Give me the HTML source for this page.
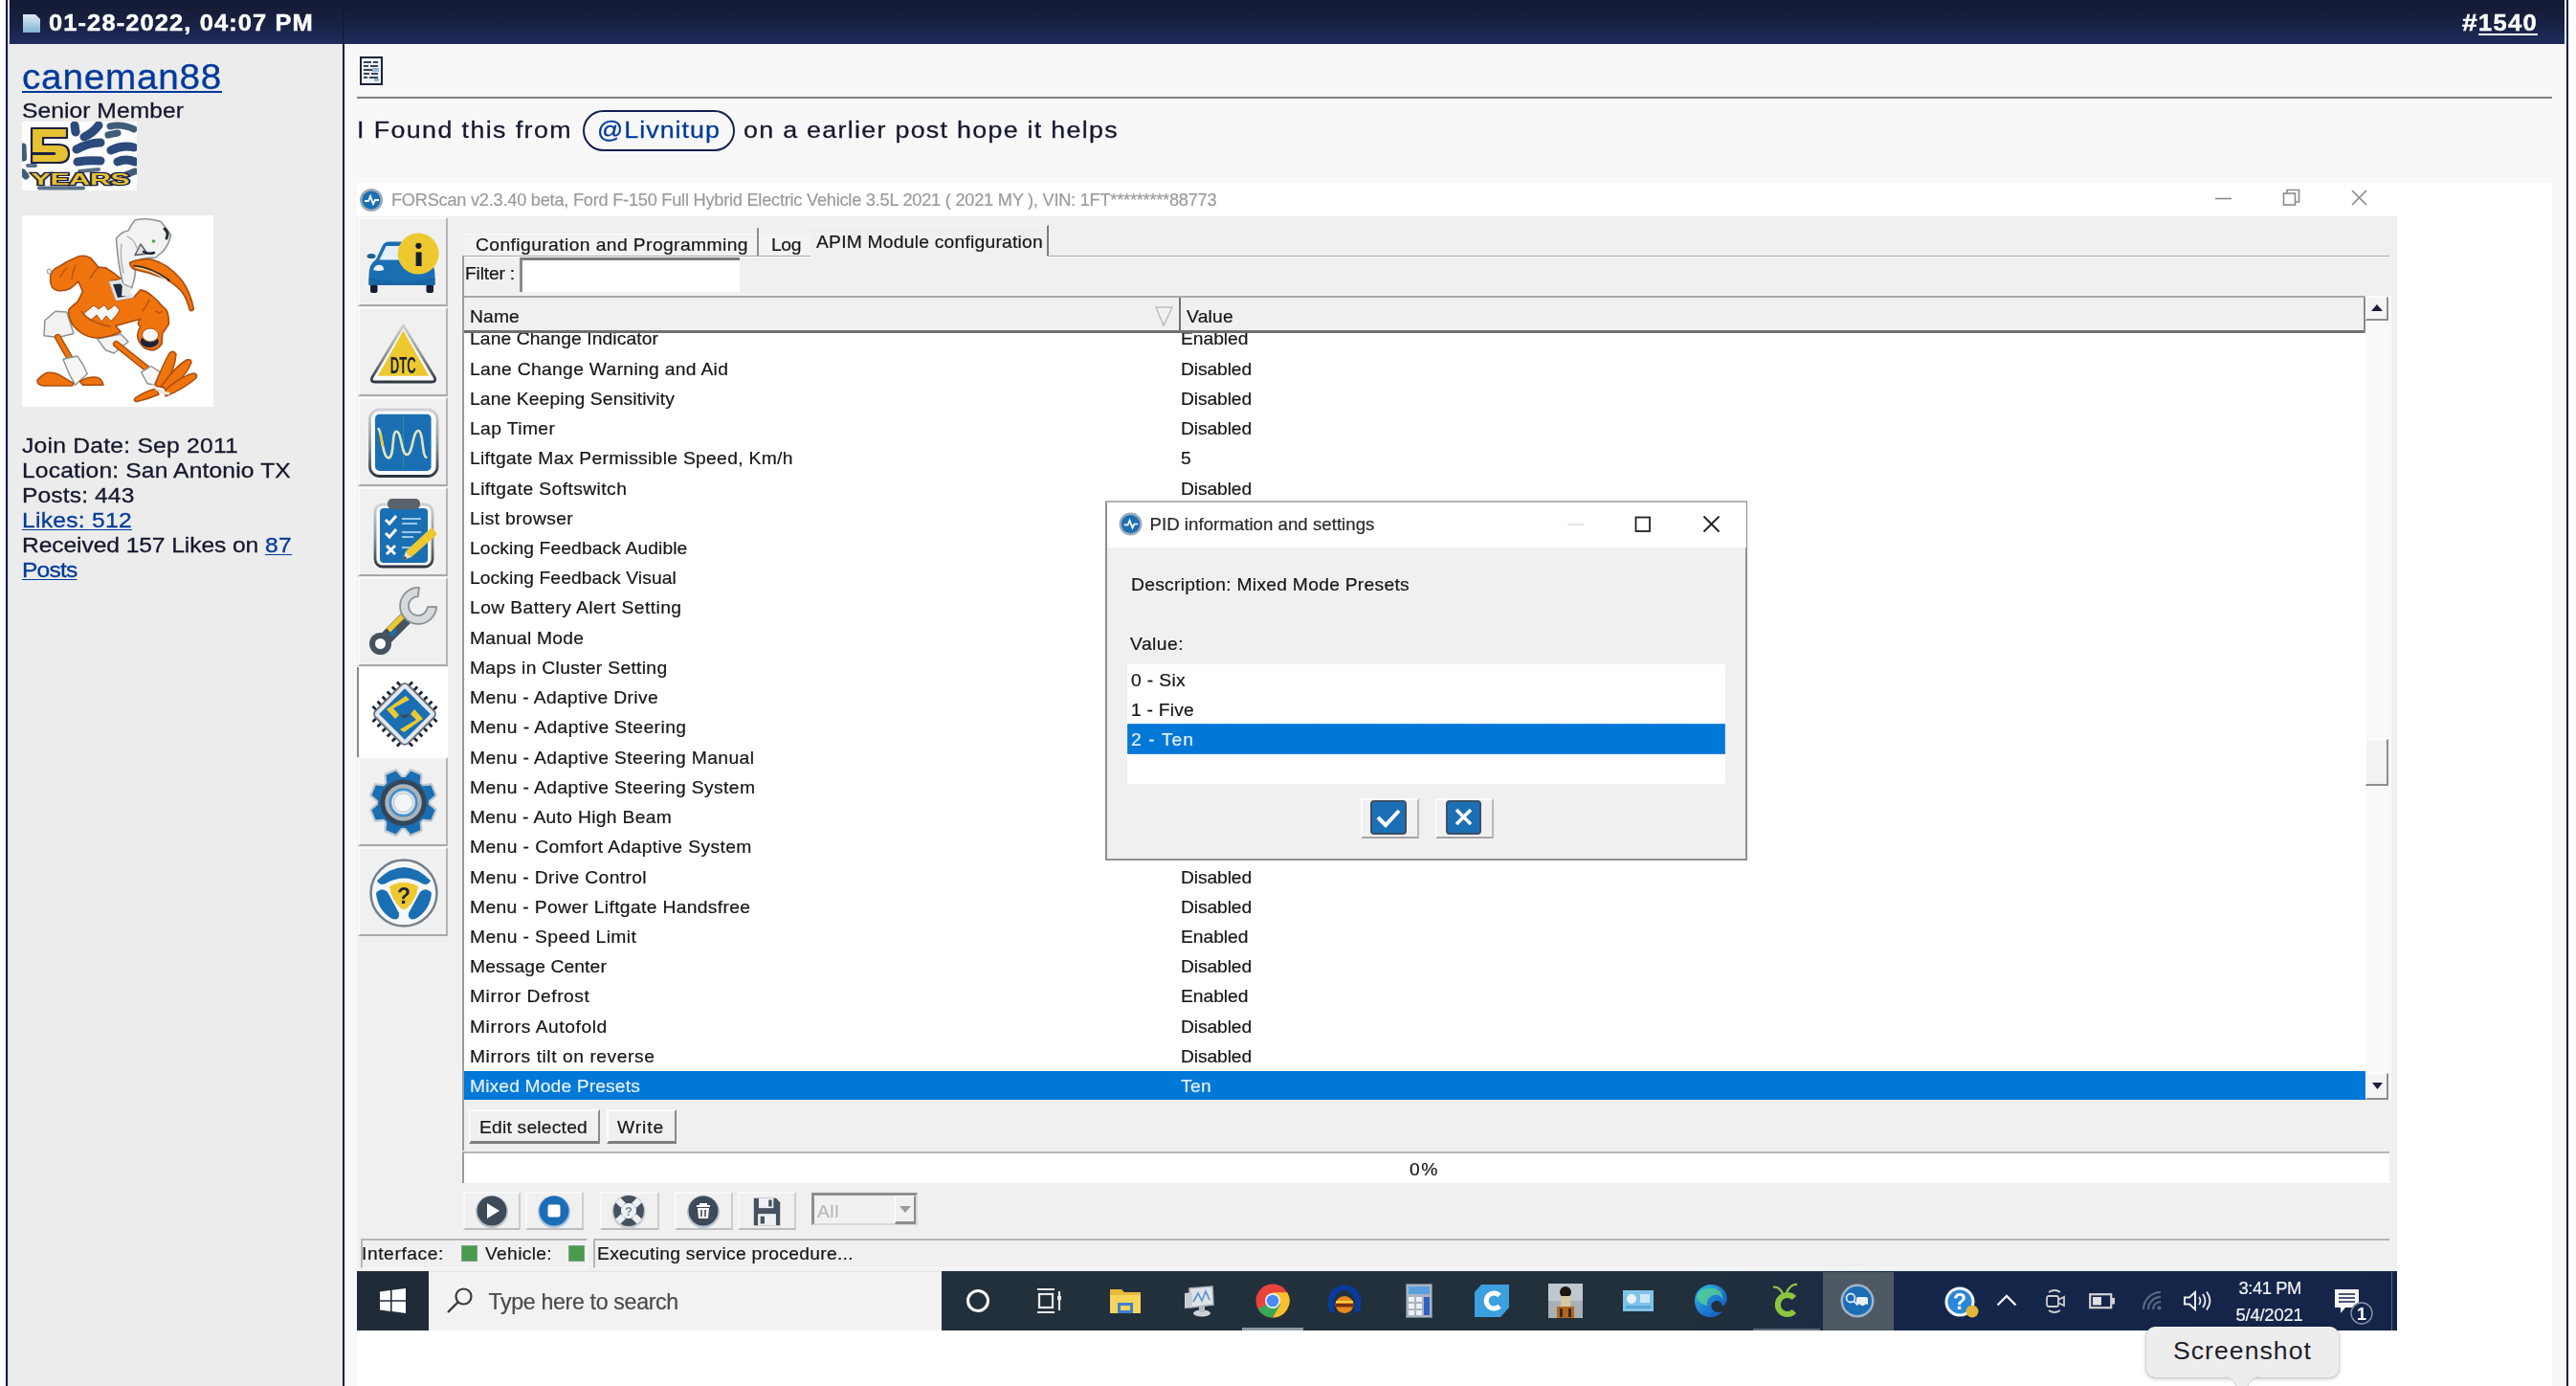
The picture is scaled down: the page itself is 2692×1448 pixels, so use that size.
<!DOCTYPE html>
<html><head><meta charset="utf-8"><title>Post</title>
<style>
html,body{margin:0;padding:0;background:#fff;}
body{width:2692px;height:1448px;overflow:hidden;position:relative;font-family:"Liberation Sans",sans-serif;}
.t{position:absolute;white-space:nowrap;font-family:"Liberation Sans",sans-serif;}
.b{position:absolute;box-sizing:border-box;}
svg{position:absolute;overflow:visible;}

.hdr{background:linear-gradient(#141a34 0%,#17203f 45%,#1f2c5d 100%);}
a{color:#003a9b}
.ui{filter:blur(0.35px);-webkit-text-stroke:0.2px currentColor;}
.v{-webkit-text-stroke:0.3px currentColor;}
.vb{-webkit-text-stroke:0.45px currentColor;}

</style></head><body>
<div class="b " style="left:6.0px;top:0.0px;width:2.0px;height:1448.0px;background:#0c1450;"></div>
<div class="b " style="left:8.0px;top:0.0px;width:2.0px;height:1448.0px;background:#dfe1ea;"></div>
<div class="b " style="left:10.0px;top:46.0px;width:348.0px;height:1402.0px;background:#ececec;"></div>
<div class="b " style="left:358.0px;top:0.0px;width:2.0px;height:1448.0px;background:#0c1450;"></div>
<div class="b " style="left:360.0px;top:46.0px;width:2322.0px;height:1402.0px;background:#f8f8f8;"></div>
<div class="b hdr" style="left:10.0px;top:0.0px;width:2670.0px;height:46.0px;"></div>
<div class="b " style="left:358.0px;top:0.0px;width:1.0px;height:46.0px;background:#10183a;"></div>
<div class="b " style="left:2682.0px;top:0.0px;width:2.0px;height:1448.0px;background:#0c1450;"></div>
<svg style="left:23px;top:14px" width="20" height="21" viewBox="0 0 20 21"><defs><linearGradient id="dg" x1="0" y1="0" x2="0" y2="1"><stop offset="0" stop-color="#dfeaf3"/><stop offset="1" stop-color="#7fb4d6"/></linearGradient></defs><path d="M1 1 H14 L19 6 V20 H1 Z" fill="url(#dg)"/></svg>
<div class="t vb" style="left:51.0px;top:13.3px;font-size:23.6px;line-height:23.6px;letter-spacing:1.016px;color:#fff;font-weight:bold;transform:scaleX(1.080);transform-origin:0 0;">01-28-2022, 04:07 PM</div>
<div class="t vb" style="left:2573.0px;top:13.3px;font-size:23.6px;line-height:23.6px;letter-spacing:0.000px;color:#fff;font-weight:bold;transform:scaleX(1.200);transform-origin:0 0;">#</div>
<div class="t vb" style="left:2589.5px;top:13.3px;font-size:23.6px;line-height:23.6px;letter-spacing:1.227px;color:#fff;font-weight:bold;transform:scaleX(1.080);transform-origin:0 0;text-decoration:underline;text-decoration-thickness:1.6px;text-underline-offset:3px;">1540</div>
<div class="t v" style="left:23.0px;top:61.7px;font-size:37px;line-height:37px;letter-spacing:0.737px;color:#003a9b;transform:scaleX(1.045);transform-origin:0 0;text-decoration:underline;text-decoration-thickness:2px;text-underline-offset:2px;">caneman88</div>
<div class="t v" style="left:23.0px;top:105.1px;font-size:22.6px;line-height:22.6px;letter-spacing:0.042px;color:#15182c;transform:scaleX(1.090);transform-origin:0 0;">Senior Member</div>
<svg style="left:23px;top:127px;overflow:hidden" width="120" height="72" viewBox="0 0 120 72">
<rect width="120" height="72" fill="#fdfdfd"/>
<g fill="none" stroke-linecap="round">
<g stroke="#2c4a7c" stroke-width="9">
<path d="M55 4 L56 11"/><path d="M80 4 Q74 12 65 16"/><path d="M57 29 Q70 22 82 22"/><path d="M58 42 Q70 40 82 41"/><path d="M93 30 Q105 24 117 27"/><path d="M100 42 Q108 38 118 42"/>
</g>
<g stroke="#3f5d78" stroke-width="7">
<path d="M92 5 Q104 2 117 8"/><path d="M90 14 L100 12"/><path d="M1 26 L1.500 38"/><path d="M1 53 L4 57"/><path d="M108 56 L118 52"/>
</g>
<g stroke="#5a7288" stroke-width="4"><path d="M6 46 L14 46"/><path d="M18 69.500 H64"/><path d="M60 52 L80 50"/></g>
</g>
<path d="M10 7 H47 V17 H22 V24 H38 Q49 24 49 33 V34 Q49 43 38 43 H10 V34 H33 Q36 33.500 33 33 H10 Z" fill="#e6c232" stroke="#1b2144" stroke-width="2.200" stroke-linejoin="round"/>
<text x="9.500" y="66" font-family="Liberation Sans" font-weight="bold" font-size="21" fill="#e6c232" stroke="#1b2144" stroke-width="3" paint-order="stroke" textLength="103" lengthAdjust="spacingAndGlyphs" transform="translate(0,66) scale(1,0.800) translate(0,-66)">YEARS</text>
</svg>
<svg style="left:23px;top:225px;filter:blur(0.4px)" width="200" height="200" viewBox="0 0 200 200"><rect width="200" height="200" fill="#fff"/>
<g stroke-linejoin="round" stroke-linecap="round">
<!-- neck + head -->
<path d="M118 5 Q132 2 145 6.500 Q150 12 155.500 20.500 Q154 30 147 38 L139 44.500 Q130 44 124 46 L118 50 Q120 62 114.500 76 L105.500 71.500 Q100 50 98.500 24 Q104 17 111 16 Q114 10 118 5Z" fill="#f1f2f1" stroke="#8c9491" stroke-width="1.600"/>
<path d="M124 30 L131 40 L118 41.500 Z" fill="#dfe2e0" stroke="#525a63" stroke-width="1.400"/>
<path d="M127 38 q6 3 11 1" stroke="#1d2435" stroke-width="2.500" fill="none"/>
<path d="M149 14 q5 4 2 10" stroke="#2a2f38" stroke-width="3" fill="none"/>
<circle cx="137.500" cy="27" r="1.800" fill="#45b045"/>
<path d="M104 30 q-2 14 2 30 M110 22 q8 4 10 12" stroke="#a9b0ad" stroke-width="1.300" fill="none"/>
<!-- beak -->
<path d="M112.700 49.500 Q122 45 135 46 Q152 50 166.700 67.500 Q176 80 179.400 98 Q177.500 100.500 175.400 99 Q172 86 166.700 79.400 Q158 70 148 65.500 Q134 60 117.500 56.500 Q113 54 112.700 49.500Z" fill="#f0740e" stroke="#a84d0d" stroke-width="1.600"/>
<path d="M117 52.500 Q136 54 154 68" stroke="#2a2520" stroke-width="1.600" fill="none"/>
<path d="M119 54.500 Q136 57 151 67.500" stroke="#e9e3d6" stroke-width="1.200" fill="none"/>
<!-- puffs -->
<path d="M34.900 100.300 L46.800 101 L54 123.500 L38 127.500 L23 125.700 L23.800 109.800 Z" fill="#f1f2f1" stroke="#8c9491" stroke-width="1.500"/>
<path d="M78.600 128.900 L103.200 124 L111.100 132 L96 144 L87.300 140.800 Z" fill="#f1f2f1" stroke="#8c9491" stroke-width="1.500"/>
<!-- left arm -->
<path d="M30 62 Q33 55 38 54 Q46 48 55.600 44.400 Q63.500 40 71.400 44.400 Q76 49 79.400 54 L87.300 54.800 Q96 60 103.200 66 L91.300 69 L98.400 88.900 L116.700 85.700 L123.800 77.800 Q130 79 135 83.300 Q142 89 146.800 95.200 Q152 99 152.400 103.200 Q154 110 153.200 113.800 Q150 119 146.800 123.300 L146 134.400 Q143 139 138 140.800 Q131 141 127 137.600 Q121 132 120.600 125.700 Q121 120 123.800 116.200 Q119 113 123.800 108.300 L97.600 115.400 L103.200 121.700 Q92 127 79.400 128 Q70 128.500 60.300 121.700 Q52 115 50.800 109.800 Q48 104 49.200 98 Q53 94 58 90.500 Q61 85 63.500 79.400 L58.700 69 Q55 73 50.800 76.200 Q44 79.500 38 78.600 Q33 77.500 31.700 75.400 Q28.500 69 30 62Z" fill="#f0740e" stroke="#a84d0d" stroke-width="1.600"/>
<circle cx="28.500" cy="58.500" r="2.500" fill="#e6e8e6" stroke="#8c9491" stroke-width="1"/>
<!-- collar -->
<path d="M91.300 69 L103 68.300 L116.700 85.700 L98.400 88.900 Z" fill="#e4e7e9" stroke="#cfd4d8" stroke-width="0.800"/>
<path d="M95 72 L103 71.500 L112.500 84 L100 86 Z" fill="#1e2a40"/>
<path d="M105 72 L114.500 76 L112 85 L104 84 Z" fill="#e6e8e6"/>
<!-- M -->
<path d="M64 103 L75 94 L80 98 L86 93.500 L90 99 L97 93.500 L102 99 L99 104 L93 110.500 L88 105 L83 111 L78 104 L72 109.500 Z" fill="#f6f6f4" stroke="#a84d0d" stroke-width="1"/>
<!-- muscle lines -->
<path d="M40 64 Q43 58 47 55 M52 66 Q53 58 56 52 M71 66 Q76 58 80 54 M62 100 Q70 112 92 116 M126 100 Q131 94 133 88 M140 100 Q144 104 146 100" stroke="#b3540f" stroke-width="1.500" fill="none"/>
<!-- fist -->
<ellipse cx="133.300" cy="131.500" rx="9.500" ry="6.500" fill="#1b2340"/>
<ellipse cx="134.100" cy="125" rx="8.500" ry="7" fill="#f6f6f4" stroke="#a84d0d" stroke-width="1"/>
<!-- legs -->
<path d="M37.300 127.300 L52.400 153.500" stroke="#a84d0d" stroke-width="7"/><path d="M37.300 127.300 L52.400 153.500" stroke="#f0740e" stroke-width="4.200"/>
<path d="M98.400 134.400 L130.200 159.800" stroke="#a84d0d" stroke-width="7"/><path d="M98.400 134.400 L130.200 159.800" stroke="#f0740e" stroke-width="4.200"/>
<!-- ankle puffs -->
<path d="M42.900 150.300 L57.900 147 Q64 155 68.300 165.400 L55.600 177.300 L49.200 165.400 Z" fill="#f6f6f5" stroke="#8c9491" stroke-width="1.400"/>
<path d="M124.600 163.800 L134.900 157.500 L144.400 163.800 L138.100 177.300 L131 175.700 Z" fill="#f6f6f5" stroke="#8c9491" stroke-width="1.400"/>
<!-- left foot -->
<path d="M15.900 172.500 Q20 167 25.400 164.600 Q32 163.500 38.100 166.200 L54 175.700 L52.400 178.100 L22.200 178.100 Q16 177 15.900 172.500Z" fill="#f0740e" stroke="#a84d0d" stroke-width="1.500"/>
<path d="M60.300 173.300 Q70 168 79.400 169.400 Q84 172 84.900 177.300 L63.500 177.300 Z" fill="#f0740e" stroke="#a84d0d" stroke-width="1.500"/>
<!-- right foot toes -->
<g fill="#f0740e" stroke="#a84d0d" stroke-width="1.500">
<path d="M139 178 Q146 158 154 144 Q158 140 161 145 Q160 160 149 180 Z"/>
<path d="M146 178 Q160 158 172 151 Q177 149.500 177 154 Q170 170 152 184 Z"/>
<path d="M150 182 Q166 168 179 165 Q184 165.500 182 170 Q168 182 150 189 Z"/>
<path d="M140 181 Q128 184 118 191 Q116 194 120 194.500 Q132 192 143 187 Z"/>
</g>
<path d="M137 178 Q145 186 153 186" stroke="#e9e6da" stroke-width="3" fill="none"/>
</g>
</svg>
<div class="t v" style="left:23.0px;top:454.8px;font-size:22.6px;line-height:22.6px;letter-spacing:0.222px;color:#15182c;transform:scaleX(1.090);transform-origin:0 0;">Join Date: Sep 2011</div>
<div class="t v" style="left:23.0px;top:480.9px;font-size:22.6px;line-height:22.6px;letter-spacing:0.131px;color:#15182c;transform:scaleX(1.090);transform-origin:0 0;">Location: San Antonio TX</div>
<div class="t v" style="left:23.0px;top:506.9px;font-size:22.6px;line-height:22.6px;letter-spacing:0.101px;color:#15182c;transform:scaleX(1.090);transform-origin:0 0;">Posts: 443</div>
<div class="t v" style="left:23.0px;top:533.0px;font-size:22.6px;line-height:22.6px;letter-spacing:0.248px;color:#003a9b;transform:scaleX(1.090);transform-origin:0 0;text-decoration:underline;text-decoration-thickness:1.4px;text-underline-offset:2px;">Likes: 512</div>
<div class="t v" style="left:23.0px;top:559.1px;font-size:22.6px;line-height:22.6px;letter-spacing:-0.087px;color:#15182c;transform:scaleX(1.090);transform-origin:0 0;">Received 157 Likes on </div>
<div class="t v" style="left:277.0px;top:559.1px;font-size:22.6px;line-height:22.6px;letter-spacing:0.275px;color:#003a9b;transform:scaleX(1.090);transform-origin:0 0;text-decoration:underline;text-decoration-thickness:1.4px;text-underline-offset:2px;">87</div>
<div class="t v" style="left:23.0px;top:585.2px;font-size:22.6px;line-height:22.6px;letter-spacing:-0.754px;color:#003a9b;transform:scaleX(1.090);transform-origin:0 0;text-decoration:underline;text-decoration-thickness:1.4px;text-underline-offset:2px;">Posts</div>
<svg style="left:376px;top:59px" width="24" height="30" viewBox="0 0 24 30"><rect x="1" y="1" width="22" height="28" fill="#eef3f8" stroke="#1b2238" stroke-width="2"/><g stroke="#39455e" stroke-width="2"><path d="M4 6h8M14 6h5M4 10h5M11 10h8M4 14h9M4 18h6M12 18h7M4 22h4M10 22h9"/></g><rect x="13" y="12" width="7" height="4" fill="#8fb6d8"/><rect x="15" y="23" width="5" height="3" fill="#8fb6d8"/></svg>
<div class="b " style="left:373.0px;top:101.0px;width:2294.0px;height:2.0px;background:#808080;"></div>
<div class="t v" style="left:373.0px;top:123.6px;font-size:24.6px;line-height:24.6px;letter-spacing:1.285px;color:#15182c;transform:scaleX(1.090);transform-origin:0 0;">I Found this from</div>
<div class="b " style="left:609.0px;top:115.0px;width:159.0px;height:43.0px;border:2px solid #14204f;border-radius:22px;"></div>
<div class="t v" style="left:624.0px;top:123.6px;font-size:24.6px;line-height:24.6px;letter-spacing:0.954px;color:#003a9b;transform:scaleX(1.090);transform-origin:0 0;">@Livnitup</div>
<div class="t v" style="left:777.0px;top:123.6px;font-size:24.6px;line-height:24.6px;letter-spacing:1.190px;color:#15182c;transform:scaleX(1.090);transform-origin:0 0;">on a earlier post hope it helps</div>
<div class="b " style="left:373.0px;top:191.0px;width:2294.0px;height:1257.0px;background:#fff;"></div>
<div class="b " style="left:373.0px;top:226.0px;width:2132.0px;height:1103.0px;background:#f0f0f0;"></div>
<svg style="left:375px;top:196px" width="26" height="26" viewBox="0 0 26 26"><circle cx="13" cy="13" r="12" fill="#9aa9b8"/><circle cx="13" cy="13" r="9.6" fill="#1c6fb3"/><path d="M6 14h4l2-5 3 8 2-4h4" fill="none" stroke="#fff" stroke-width="1.8"/></svg>
<div class="t ui" style="left:409.0px;top:199.8px;font-size:18.2px;line-height:18.2px;letter-spacing:-0.236px;color:#9b9b9b;">FORScan v2.3.40 beta, Ford F-150 Full Hybrid Electric Vehicle 3.5L 2021 ( 2021 MY ), VIN: 1FT*********88773</div>
<svg style="left:2300px;top:191px" width="200" height="35" viewBox="0 0 200 35"><g fill="none" stroke="#8a8a8a" stroke-width="1.6"><path d="M15 16.5h17"/><rect x="86.5" y="11" width="12" height="12"/><path d="M90 11v-3.5h12.5v12.5h-4"/><path d="M158 8l15 15M173 8l-15 15"/></g></svg>
<div class="b " style="left:374.0px;top:227.0px;width:94.0px;height:93.0px;background:#f0f0f0;border-top:2px solid #fafafa;border-left:2px solid #fafafa;border-right:2px solid #b5b5b5;border-bottom:2px solid #a9a9a9;"></div>
<div class="b " style="left:374.0px;top:321.0px;width:94.0px;height:93.0px;background:#f0f0f0;border-top:2px solid #fafafa;border-left:2px solid #fafafa;border-right:2px solid #b5b5b5;border-bottom:2px solid #a9a9a9;"></div>
<div class="b " style="left:374.0px;top:415.0px;width:94.0px;height:93.0px;background:#f0f0f0;border-top:2px solid #fafafa;border-left:2px solid #fafafa;border-right:2px solid #b5b5b5;border-bottom:2px solid #a9a9a9;"></div>
<div class="b " style="left:374.0px;top:509.0px;width:94.0px;height:93.0px;background:#f0f0f0;border-top:2px solid #fafafa;border-left:2px solid #fafafa;border-right:2px solid #b5b5b5;border-bottom:2px solid #a9a9a9;"></div>
<div class="b " style="left:374.0px;top:603.0px;width:94.0px;height:93.0px;background:#f0f0f0;border-top:2px solid #fafafa;border-left:2px solid #fafafa;border-right:2px solid #b5b5b5;border-bottom:2px solid #a9a9a9;"></div>
<div class="b " style="left:373.0px;top:697.0px;width:95.0px;height:94.0px;background:#fff;border-left:2px solid #8a8a8a;"></div>
<div class="b " style="left:374.0px;top:791.0px;width:94.0px;height:93.0px;background:#f0f0f0;border-top:2px solid #fafafa;border-left:2px solid #fafafa;border-right:2px solid #b5b5b5;border-bottom:2px solid #a9a9a9;"></div>
<div class="b " style="left:374.0px;top:885.0px;width:94.0px;height:93.0px;background:#f0f0f0;border-top:2px solid #fafafa;border-left:2px solid #fafafa;border-right:2px solid #b5b5b5;border-bottom:2px solid #a9a9a9;"></div>
<div class="b " style="left:485.0px;top:244.0px;width:308.0px;height:24.0px;background:#f3f3f3;border-top:1px solid #fbfbfb;"></div>
<div class="b " style="left:791.0px;top:238.0px;width:2.0px;height:30.0px;background:#8e8e8e;"></div>
<div class="t ui" style="left:496.5px;top:246.7px;font-size:18.6px;line-height:18.6px;letter-spacing:0.404px;color:#161616;transform:scaleX(1.035);transform-origin:0 0;">Configuration and Programming</div>
<div class="b " style="left:793.0px;top:244.0px;width:54.0px;height:24.0px;background:#f3f3f3;"></div>
<div class="t ui" style="left:806.0px;top:246.7px;font-size:18.6px;line-height:18.6px;letter-spacing:-0.361px;color:#161616;transform:scaleX(1.035);transform-origin:0 0;">Log</div>
<div class="b " style="left:847.0px;top:235.0px;width:249.0px;height:34.0px;background:#f0f0f0;border-right:2px solid #7d7d7d;border-top:1px solid #f8f8f8;"></div>
<div class="t ui" style="left:853.4px;top:243.9px;font-size:18.6px;line-height:18.6px;letter-spacing:0.227px;color:#161616;transform:scaleX(1.035);transform-origin:0 0;">APIM Module configuration</div>
<div class="b " style="left:483.0px;top:267.0px;width:2014.0px;height:2.0px;background:linear-gradient(#a9a9a9 50%,#fdfdfd 50%);"></div>
<div class="b " style="left:847.0px;top:267.0px;width:247.0px;height:2.0px;background:#f0f0f0;"></div>
<div class="b " style="left:483.0px;top:268.0px;width:2.0px;height:934.0px;background:#9a9a9a;"></div>
<div class="t ui" style="left:485.5px;top:276.7px;font-size:18.6px;line-height:18.6px;letter-spacing:-0.178px;color:#161616;transform:scaleX(1.035);transform-origin:0 0;">Filter :</div>
<div class="b " style="left:543.0px;top:269.0px;width:230.0px;height:36.0px;background:#fff;border-top:3px solid #7b7b7b;border-left:3px solid #8a8a8a;"></div>
<div class="b " style="left:485.0px;top:309.0px;width:1987.0px;height:840.0px;background:#fff;"></div>
<div class="b " style="left:485.0px;top:1119.0px;width:1987.0px;height:30.0px;background:#0078d7;"></div>
<div class="t ui" style="left:490.5px;top:345.3px;font-size:18.6px;line-height:18.6px;letter-spacing:0.106px;color:#161616;transform:scaleX(1.035);transform-origin:0 0;">Lane Change Indicator</div>
<div class="t ui" style="left:1234.0px;top:345.3px;font-size:18.6px;line-height:18.6px;letter-spacing:-0.021px;color:#161616;transform:scaleX(1.035);transform-origin:0 0;">Enabled</div>
<div class="t ui" style="left:490.5px;top:376.6px;font-size:18.6px;line-height:18.6px;letter-spacing:0.315px;color:#161616;transform:scaleX(1.035);transform-origin:0 0;">Lane Change Warning and Aid</div>
<div class="t ui" style="left:1234.0px;top:376.6px;font-size:18.6px;line-height:18.6px;letter-spacing:-0.110px;color:#161616;transform:scaleX(1.035);transform-origin:0 0;">Disabled</div>
<div class="t ui" style="left:490.5px;top:407.8px;font-size:18.6px;line-height:18.6px;letter-spacing:0.128px;color:#161616;transform:scaleX(1.035);transform-origin:0 0;">Lane Keeping Sensitivity</div>
<div class="t ui" style="left:1234.0px;top:407.8px;font-size:18.6px;line-height:18.6px;letter-spacing:-0.110px;color:#161616;transform:scaleX(1.035);transform-origin:0 0;">Disabled</div>
<div class="t ui" style="left:490.5px;top:439.0px;font-size:18.6px;line-height:18.6px;letter-spacing:0.398px;color:#161616;transform:scaleX(1.035);transform-origin:0 0;">Lap Timer</div>
<div class="t ui" style="left:1234.0px;top:439.0px;font-size:18.6px;line-height:18.6px;letter-spacing:-0.110px;color:#161616;transform:scaleX(1.035);transform-origin:0 0;">Disabled</div>
<div class="t ui" style="left:490.5px;top:470.2px;font-size:18.6px;line-height:18.6px;letter-spacing:0.307px;color:#161616;transform:scaleX(1.035);transform-origin:0 0;">Liftgate Max Permissible Speed, Km/h</div>
<div class="t ui" style="left:1234.0px;top:470.2px;font-size:18.6px;line-height:18.6px;letter-spacing:-0.683px;color:#161616;transform:scaleX(1.035);transform-origin:0 0;">5</div>
<div class="t ui" style="left:490.5px;top:501.5px;font-size:18.6px;line-height:18.6px;letter-spacing:0.411px;color:#161616;transform:scaleX(1.035);transform-origin:0 0;">Liftgate Softswitch</div>
<div class="t ui" style="left:1234.0px;top:501.5px;font-size:18.6px;line-height:18.6px;letter-spacing:-0.110px;color:#161616;transform:scaleX(1.035);transform-origin:0 0;">Disabled</div>
<div class="t ui" style="left:490.5px;top:532.7px;font-size:18.6px;line-height:18.6px;letter-spacing:0.340px;color:#161616;transform:scaleX(1.035);transform-origin:0 0;">List browser</div>
<div class="t ui" style="left:490.5px;top:563.9px;font-size:18.6px;line-height:18.6px;letter-spacing:0.111px;color:#161616;transform:scaleX(1.035);transform-origin:0 0;">Locking Feedback Audible</div>
<div class="t ui" style="left:490.5px;top:595.2px;font-size:18.6px;line-height:18.6px;letter-spacing:0.097px;color:#161616;transform:scaleX(1.035);transform-origin:0 0;">Locking Feedback Visual</div>
<div class="t ui" style="left:490.5px;top:626.4px;font-size:18.6px;line-height:18.6px;letter-spacing:0.413px;color:#161616;transform:scaleX(1.035);transform-origin:0 0;">Low Battery Alert Setting</div>
<div class="t ui" style="left:490.5px;top:657.6px;font-size:18.6px;line-height:18.6px;letter-spacing:0.224px;color:#161616;transform:scaleX(1.035);transform-origin:0 0;">Manual Mode</div>
<div class="t ui" style="left:490.5px;top:688.9px;font-size:18.6px;line-height:18.6px;letter-spacing:0.314px;color:#161616;transform:scaleX(1.035);transform-origin:0 0;">Maps in Cluster Setting</div>
<div class="t ui" style="left:490.5px;top:720.1px;font-size:18.6px;line-height:18.6px;letter-spacing:0.355px;color:#161616;transform:scaleX(1.035);transform-origin:0 0;">Menu - Adaptive Drive</div>
<div class="t ui" style="left:490.5px;top:751.3px;font-size:18.6px;line-height:18.6px;letter-spacing:0.416px;color:#161616;transform:scaleX(1.035);transform-origin:0 0;">Menu - Adaptive Steering</div>
<div class="t ui" style="left:490.5px;top:782.5px;font-size:18.6px;line-height:18.6px;letter-spacing:0.400px;color:#161616;transform:scaleX(1.035);transform-origin:0 0;">Menu - Adaptive Steering Manual</div>
<div class="t ui" style="left:490.5px;top:813.8px;font-size:18.6px;line-height:18.6px;letter-spacing:0.399px;color:#161616;transform:scaleX(1.035);transform-origin:0 0;">Menu - Adaptive Steering System</div>
<div class="t ui" style="left:490.5px;top:845.0px;font-size:18.6px;line-height:18.6px;letter-spacing:0.309px;color:#161616;transform:scaleX(1.035);transform-origin:0 0;">Menu - Auto High Beam</div>
<div class="t ui" style="left:490.5px;top:876.2px;font-size:18.6px;line-height:18.6px;letter-spacing:0.401px;color:#161616;transform:scaleX(1.035);transform-origin:0 0;">Menu - Comfort Adaptive System</div>
<div class="t ui" style="left:490.5px;top:907.5px;font-size:18.6px;line-height:18.6px;letter-spacing:0.358px;color:#161616;transform:scaleX(1.035);transform-origin:0 0;">Menu - Drive Control</div>
<div class="t ui" style="left:1234.0px;top:907.5px;font-size:18.6px;line-height:18.6px;letter-spacing:-0.110px;color:#161616;transform:scaleX(1.035);transform-origin:0 0;">Disabled</div>
<div class="t ui" style="left:490.5px;top:938.7px;font-size:18.6px;line-height:18.6px;letter-spacing:0.343px;color:#161616;transform:scaleX(1.035);transform-origin:0 0;">Menu - Power Liftgate Handsfree</div>
<div class="t ui" style="left:1234.0px;top:938.7px;font-size:18.6px;line-height:18.6px;letter-spacing:-0.110px;color:#161616;transform:scaleX(1.035);transform-origin:0 0;">Disabled</div>
<div class="t ui" style="left:490.5px;top:969.9px;font-size:18.6px;line-height:18.6px;letter-spacing:0.396px;color:#161616;transform:scaleX(1.035);transform-origin:0 0;">Menu - Speed Limit</div>
<div class="t ui" style="left:1234.0px;top:969.9px;font-size:18.6px;line-height:18.6px;letter-spacing:-0.021px;color:#161616;transform:scaleX(1.035);transform-origin:0 0;">Enabled</div>
<div class="t ui" style="left:490.5px;top:1001.2px;font-size:18.6px;line-height:18.6px;letter-spacing:0.121px;color:#161616;transform:scaleX(1.035);transform-origin:0 0;">Message Center</div>
<div class="t ui" style="left:1234.0px;top:1001.2px;font-size:18.6px;line-height:18.6px;letter-spacing:-0.110px;color:#161616;transform:scaleX(1.035);transform-origin:0 0;">Disabled</div>
<div class="t ui" style="left:490.5px;top:1032.4px;font-size:18.6px;line-height:18.6px;letter-spacing:0.542px;color:#161616;transform:scaleX(1.035);transform-origin:0 0;">Mirror Defrost</div>
<div class="t ui" style="left:1234.0px;top:1032.4px;font-size:18.6px;line-height:18.6px;letter-spacing:-0.021px;color:#161616;transform:scaleX(1.035);transform-origin:0 0;">Enabled</div>
<div class="t ui" style="left:490.5px;top:1063.6px;font-size:18.6px;line-height:18.6px;letter-spacing:0.549px;color:#161616;transform:scaleX(1.035);transform-origin:0 0;">Mirrors Autofold</div>
<div class="t ui" style="left:1234.0px;top:1063.6px;font-size:18.6px;line-height:18.6px;letter-spacing:-0.110px;color:#161616;transform:scaleX(1.035);transform-origin:0 0;">Disabled</div>
<div class="t ui" style="left:490.5px;top:1094.8px;font-size:18.6px;line-height:18.6px;letter-spacing:0.534px;color:#161616;transform:scaleX(1.035);transform-origin:0 0;">Mirrors tilt on reverse</div>
<div class="t ui" style="left:1234.0px;top:1094.8px;font-size:18.6px;line-height:18.6px;letter-spacing:-0.110px;color:#161616;transform:scaleX(1.035);transform-origin:0 0;">Disabled</div>
<div class="t ui" style="left:490.5px;top:1126.1px;font-size:18.6px;line-height:18.6px;letter-spacing:0.136px;color:#e4f0fb;transform:scaleX(1.035);transform-origin:0 0;">Mixed Mode Presets</div>
<div class="t ui" style="left:1234.0px;top:1126.1px;font-size:18.6px;line-height:18.6px;letter-spacing:0.310px;color:#e4f0fb;transform:scaleX(1.035);transform-origin:0 0;">Ten</div>
<div class="b " style="left:485.0px;top:309.0px;width:1987.0px;height:39.0px;background:#f0f0f0;border-top:2px solid #a9a9a9;border-bottom:3px solid #6f6f6f;"></div>
<div class="b " style="left:1232.0px;top:311.0px;width:2.0px;height:36.0px;background:#6f6f6f;"></div>
<div class="b " style="left:2470.0px;top:311.0px;width:2.0px;height:37.0px;background:#8a8a8a;"></div>
<div class="t ui" style="left:490.5px;top:321.6px;font-size:18.6px;line-height:18.6px;letter-spacing:0.157px;color:#161616;transform:scaleX(1.035);transform-origin:0 0;">Name</div>
<div class="t ui" style="left:1240.0px;top:321.6px;font-size:18.6px;line-height:18.6px;letter-spacing:0.230px;color:#161616;transform:scaleX(1.035);transform-origin:0 0;">Value</div>
<svg style="left:1207px;top:320px" width="19" height="21" viewBox="0 0 19 21"><path d="M1 1H18L9 20Z" fill="none" stroke="#bdbdbd" stroke-width="1.5"/></svg>
<div class="b " style="left:2472.0px;top:309.0px;width:27.0px;height:840.0px;background:#f9f9f9;"></div>
<div class="b " style="left:2472.0px;top:310.0px;width:24.0px;height:25.0px;background:#f4f4f4;border-top:1px solid #fff;border-left:1px solid #fff;border-right:2px solid #8d8d8d;border-bottom:2px solid #8d8d8d;"></div>
<svg style="left:2478px;top:318px" width="12" height="7"><path d="M0 7L6 0L12 7Z" fill="#1c1c3a"/></svg>
<div class="b " style="left:2472.0px;top:772.0px;width:24.0px;height:49.0px;background:#f2f2f2;border-top:1px solid #fff;border-left:1px solid #fff;border-right:2px solid #8d8d8d;border-bottom:2px solid #8d8d8d;"></div>
<div class="b " style="left:2472.0px;top:1121.0px;width:24.0px;height:28.0px;background:#f4f4f4;border-top:1px solid #fff;border-left:1px solid #fff;border-right:2px solid #8d8d8d;border-bottom:2px solid #8d8d8d;"></div>
<svg style="left:2479px;top:1131px" width="11" height="7"><path d="M0 0H11L5.5 7Z" fill="#1c1c3a"/></svg>
<div class="b " style="left:490.0px;top:1159.0px;width:137.0px;height:36.0px;background:#f0f0f0;border-top:2px solid #fbfbfb;border-left:2px solid #fbfbfb;border-right:2px solid #8b8b8b;border-bottom:3px solid #7f7f7f;"></div>
<div class="t ui" style="left:501.0px;top:1168.5px;font-size:18.6px;line-height:18.6px;letter-spacing:0.206px;color:#161616;transform:scaleX(1.035);transform-origin:0 0;">Edit selected</div>
<div class="b " style="left:634.0px;top:1159.0px;width:73.0px;height:36.0px;background:#f0f0f0;border-top:2px solid #fbfbfb;border-left:2px solid #fbfbfb;border-right:2px solid #8b8b8b;border-bottom:3px solid #7f7f7f;"></div>
<div class="t ui" style="left:645.0px;top:1168.5px;font-size:18.6px;line-height:18.6px;letter-spacing:0.857px;color:#161616;transform:scaleX(1.035);transform-origin:0 0;">Write</div>
<div class="b " style="left:483.0px;top:1203.0px;width:2014.0px;height:33.0px;background:#fff;border-top:2px solid #b8b8b8;border-left:2px solid #9a9a9a;"></div>
<div class="t ui" style="left:1473.0px;top:1212.8px;font-size:18.6px;line-height:18.6px;letter-spacing:1.534px;color:#161616;transform:scaleX(1.035);transform-origin:0 0;">0%</div>
<div class="b " style="left:484.0px;top:1245.0px;width:60.0px;height:40.0px;background:#f0f0f0;border-top:2px solid #f8f8f8;border-left:2px solid #f8f8f8;border-right:2px solid #cdcdcd;border-bottom:2px solid #bdbdbd;"></div>
<div class="b " style="left:549.0px;top:1245.0px;width:61.0px;height:40.0px;background:#f0f0f0;border-top:2px solid #f8f8f8;border-left:2px solid #f8f8f8;border-right:2px solid #cdcdcd;border-bottom:2px solid #bdbdbd;"></div>
<div class="b " style="left:627.0px;top:1245.0px;width:62.0px;height:40.0px;background:#f0f0f0;border-top:2px solid #f8f8f8;border-left:2px solid #f8f8f8;border-right:2px solid #cdcdcd;border-bottom:2px solid #bdbdbd;"></div>
<div class="b " style="left:705.0px;top:1245.0px;width:61.0px;height:40.0px;background:#f0f0f0;border-top:2px solid #f8f8f8;border-left:2px solid #f8f8f8;border-right:2px solid #cdcdcd;border-bottom:2px solid #bdbdbd;"></div>
<div class="b " style="left:771.0px;top:1245.0px;width:61.0px;height:40.0px;background:#f0f0f0;border-top:2px solid #f8f8f8;border-left:2px solid #f8f8f8;border-right:2px solid #cdcdcd;border-bottom:2px solid #bdbdbd;"></div>
<div class="b " style="left:848.0px;top:1246.0px;width:111.0px;height:34.0px;background:#f1f1f1;border-top:3px solid #8e8e8e;border-left:3px solid #8e8e8e;border-right:2px solid #d9d9d9;border-bottom:2px solid #d9d9d9;"></div>
<div class="t ui" style="left:854.0px;top:1257.3px;font-size:18.6px;line-height:18.6px;letter-spacing:0.517px;color:#b9b9b9;transform:scaleX(1.035);transform-origin:0 0;">All</div>
<div class="b " style="left:935.0px;top:1249.0px;width:22.0px;height:30.0px;background:#f0f0f0;border-right:2px solid #8d8d8d;border-bottom:3px solid #8d8d8d;border-top:1px solid #fff;border-left:1px solid #fff;"></div>
<svg style="left:940px;top:1260px" width="12" height="7"><path d="M0 0H12L6 7Z" fill="#9b9b9b"/></svg>
<div class="b " style="left:377.0px;top:1294.0px;width:237.0px;height:31.0px;border-top:2px solid #b5b5b5;border-left:2px solid #b5b5b5;border-bottom:1px solid #fbfbfb;border-right:1px solid #fbfbfb;"></div>
<div class="b " style="left:620.0px;top:1294.0px;width:1877.0px;height:31.0px;border-top:2px solid #b5b5b5;border-left:2px solid #b5b5b5;border-bottom:1px solid #fbfbfb;"></div>
<div class="t ui" style="left:378.0px;top:1300.9px;font-size:18.6px;line-height:18.6px;letter-spacing:0.555px;color:#161616;transform:scaleX(1.035);transform-origin:0 0;">Interface:</div>
<div class="b " style="left:482.0px;top:1301.0px;width:17.0px;height:17.0px;background:#4a9a4e;border:1px solid #7f9f86;"></div>
<div class="t ui" style="left:506.5px;top:1300.9px;font-size:18.6px;line-height:18.6px;letter-spacing:0.311px;color:#161616;transform:scaleX(1.035);transform-origin:0 0;">Vehicle:</div>
<div class="b " style="left:594.0px;top:1301.0px;width:17.0px;height:17.0px;background:#4a9a4e;border:1px solid #7f9f86;"></div>
<div class="t ui" style="left:624.0px;top:1300.9px;font-size:18.6px;line-height:18.6px;letter-spacing:0.291px;color:#161616;transform:scaleX(1.035);transform-origin:0 0;">Executing service procedure...</div>
<div class="b " style="left:373.0px;top:1328.0px;width:2132.0px;height:62.0px;background:linear-gradient(90deg,#22303c 0px,#22303c 1380px,#1d2c42 1532px,#16264a 1606px,#15254a 2132px);"></div>
<div class="b " style="left:373.0px;top:1328.0px;width:75.0px;height:62.0px;background:#1f2c38;"></div>
<div class="b " style="left:448.0px;top:1328.0px;width:536.0px;height:62.0px;background:#f2f2f2;border-top:1px solid #e3e3e3;"></div>
<svg style="left:397px;top:1346px" width="27" height="26" viewBox="0 0 27 26"><path d="M0 3.6L11 2v10.3H0zM12.6 1.8L27 0v12.3H12.6zM0 13.7h11V24L0 22.4zM12.6 13.7H27V26l-14.4-2z" fill="#fff"/></svg>
<svg style="left:466px;top:1343px" width="30" height="30" viewBox="0 0 30 30"><circle cx="18.5" cy="11.5" r="8" fill="none" stroke="#3a3a3a" stroke-width="2.2"/><path d="M12.6 17.4L2 28" stroke="#3a3a3a" stroke-width="2.4" fill="none"/></svg>
<div class="t ui" style="left:510.5px;top:1349.0px;font-size:23.2px;line-height:23.2px;letter-spacing:-0.345px;color:#4a4a4a;">Type here to search</div>
<div class="b " style="left:1155.0px;top:523.0px;width:671.0px;height:376.0px;background:#f0f0f0;border:2px solid #8f8f8f;border-top:3px solid #b2b2b2;"></div>
<div class="b " style="left:1157.0px;top:525.0px;width:668.0px;height:47.0px;background:#fff;"></div>
<svg style="left:1169px;top:535px" width="25" height="25" viewBox="0 0 26 26"><circle cx="13" cy="13" r="12.4" fill="#9aa9b8"/><circle cx="13" cy="13" r="10" fill="#1c6fb3"/><path d="M6 14h4l2-5 3 8 2-4h4" fill="none" stroke="#fff" stroke-width="1.8"/></svg>
<div class="t ui" style="left:1201.5px;top:538.9px;font-size:18.6px;line-height:18.6px;letter-spacing:0.048px;color:#2a2a2a;">PID information and settings</div>
<svg style="left:1630px;top:530px" width="190" height="36" viewBox="0 0 190 36"><g fill="none"><path d="M8 18h17" stroke="#dcdcdc" stroke-width="1.6"/><rect x="79.500" y="10.5" width="14.5" height="14.500" stroke="#222" stroke-width="1.8"/><path d="M150.500 9.500l16 16M166.500 9.500l-16 16" stroke="#222" stroke-width="1.900"/></g></svg>
<div class="t ui" style="left:1181.5px;top:601.6px;font-size:18.6px;line-height:18.6px;letter-spacing:0.266px;color:#161616;transform:scaleX(1.035);transform-origin:0 0;">Description: Mixed Mode Presets</div>
<div class="t ui" style="left:1181.0px;top:663.5px;font-size:18.6px;line-height:18.6px;letter-spacing:0.458px;color:#161616;transform:scaleX(1.035);transform-origin:0 0;">Value:</div>
<div class="b " style="left:1178.0px;top:694.0px;width:625.0px;height:125.0px;background:#fff;"></div>
<div class="t ui" style="left:1182.2px;top:701.7px;font-size:18.6px;line-height:18.6px;letter-spacing:0.337px;color:#161616;transform:scaleX(1.035);transform-origin:0 0;">0 - Six</div>
<div class="t ui" style="left:1182.2px;top:732.8px;font-size:18.6px;line-height:18.6px;letter-spacing:0.219px;color:#161616;transform:scaleX(1.035);transform-origin:0 0;">1 - Five</div>
<div class="b " style="left:1178.0px;top:756.0px;width:625.0px;height:32.0px;background:#0078d7;border:1px dotted #4a9be0;"></div>
<div class="t ui" style="left:1182.2px;top:763.8px;font-size:18.6px;line-height:18.6px;letter-spacing:1.034px;color:#e4f0fb;transform:scaleX(1.035);transform-origin:0 0;">2 - Ten</div>
<div class="b " style="left:1422.0px;top:834.0px;width:61.0px;height:42.0px;background:#f0f0f0;border-top:2px solid #fafafa;border-left:2px solid #fafafa;border-right:2px solid #b9b9b9;border-bottom:2px solid #a5a5a5;"></div>
<div class="b " style="left:1500.0px;top:834.0px;width:61.0px;height:42.0px;background:#f0f0f0;border-top:2px solid #fafafa;border-left:2px solid #fafafa;border-right:2px solid #b9b9b9;border-bottom:2px solid #a5a5a5;"></div>
<svg style="left:1432px;top:836px" width="38" height="36" viewBox="0 0 38 36"><rect x="1" y="1" width="36" height="34" rx="3" fill="#1b6fb5" stroke="#3d4f66" stroke-width="2"/><path d="M8 18l8 8L30 11" fill="none" stroke="#fff" stroke-width="4"/></svg>
<svg style="left:1511px;top:836px" width="37" height="36" viewBox="0 0 37 36"><rect x="1" y="1" width="35" height="34" rx="3" fill="#1b6fb5" stroke="#3d4f66" stroke-width="2"/><path d="M11 10l15 15M26 10L11 25" fill="none" stroke="#fff" stroke-width="3.6"/></svg>
<div class="b " style="left:2243.0px;top:1386.0px;width:201.0px;height:52.5px;background:#ededed;border-radius:9px;box-shadow:0 1px 5px rgba(0,0,0,.28),0 0 1px rgba(0,0,0,.35);"></div>
<svg style="left:2323px;top:1437px" width="40" height="11" viewBox="0 0 40 11"><path d="M0 1.500 H40 Q33 1.500 29.500 6 L26 11 H14 L10.500 6 Q7 1.500 0 1.500Z" fill="#ededed"/><path d="M2 1.800 Q8 2 11 6.500 L14 11 M38 1.800 Q32 2 29 6.500 L26 11" fill="none" stroke="#c9c9c9" stroke-width="0.900"/></svg>
<div class="t " style="left:2271.0px;top:1398.1px;font-size:26.6px;line-height:26.6px;letter-spacing:1.044px;color:#1d1d2a;">Screenshot</div>
<svg class="ui" style="left:1008.4px;top:1345.4px;" width="28" height="28" viewBox="0 0 28 28"><circle cx="14" cy="14" r="10.5" fill="none" stroke="#fff" stroke-width="3"/></svg>
<svg class="ui" style="left:1081.6px;top:1345.4px;" width="30" height="28" viewBox="0 0 30 28"><g fill="none" stroke="#e8e8e8" stroke-width="2.2"><rect x="4" y="7" width="14" height="14"/><path d="M2 2h18M2 26h18"/><path d="M25 4v20"/></g><rect x="23" y="9" width="4" height="4" fill="#e8e8e8"/></svg>
<svg class="ui" style="left:1159.0px;top:1344.4px;" width="34" height="30" viewBox="0 0 34 30"><path d="M1 3h12l3 3h17v22H1z" fill="#e9b93a"/><path d="M1 9h32v19H1z" fill="#f7d45c"/><rect x="9" y="17" width="16" height="11" fill="#3f7fcf"/><rect x="12" y="20" width="10" height="5" fill="#f7d45c"/></svg>
<svg class="ui" style="left:1234.5px;top:1343.4px;" width="36" height="34" viewBox="0 0 36 34"><path d="M8 3l24-2 1 19-24 3z" fill="#dfe3e8" stroke="#aeb4bb" stroke-width="1.5"/><path d="M12 17l5-9 4 8 4-10 4 9" fill="none" stroke="#5a8fcf" stroke-width="1.6"/><path d="M3 8l8-1v16l-8 1z" fill="#c9ced4"/><ellipse cx="21" cy="29" rx="9" ry="3.500" fill="#cfd3d8"/><rect x="18" y="22" width="6" height="6" fill="#b8bdc4"/></svg>
<svg class="ui" style="left:1311.7px;top:1341.4px;" width="36" height="36" viewBox="0 0 36 36"><circle cx="18" cy="18" r="17.500" fill="#e7453c"/><path d="M18 18L2.800 26.800A17.500 17.500 0 0 0 18 35.500L26.500 21z" fill="#3aa757"/><path d="M18 18l8.500 3L18 35.500A17.500 17.500 0 0 0 33.200 9.200H18z" fill="#f9c22d"/><circle cx="18" cy="18" r="8" fill="#f1f1f1"/><circle cx="18" cy="18" r="6.300" fill="#4a8af4"/></svg>
<div class="b " style="left:1298.0px;top:1387.0px;width:64.0px;height:3.0px;background:#8f9aa3;"></div>
<svg class="ui" style="left:1385.4px;top:1340.4px;" width="40" height="38" viewBox="0 0 40 38"><path d="M4 30Q-2 6 20 2Q42 6 36 30L30 32Q34 10 20 8Q6 10 10 32Z" fill="#0a3a9a"/><ellipse cx="20" cy="23" rx="9.500" ry="9" fill="#e68a1f"/><rect x="11" y="22" width="18" height="3.500" fill="#7a2e10"/><rect x="11" y="19" width="18" height="2" fill="#f4d03b"/></svg>
<svg class="ui" style="left:1468.6px;top:1341.4px;" width="28" height="36" viewBox="0 0 28 36"><rect x="0.500" y="0.500" width="27" height="35" fill="#a9b4c0" stroke="#6d7a88"/><rect x="3" y="3" width="22" height="8" fill="#5aa0e0"/><g fill="#eef1f4"><rect x="3" y="14" width="6" height="5"/><rect x="11" y="14" width="6" height="5"/><rect x="3" y="21" width="6" height="5"/><rect x="11" y="21" width="6" height="5"/><rect x="3" y="28" width="6" height="5"/><rect x="11" y="28" width="6" height="5"/></g><rect x="19" y="14" width="6" height="19" fill="#2f63c2"/></svg>
<svg class="ui" style="left:1540.0px;top:1341.4px;" width="38" height="36" viewBox="0 0 38 36"><path d="M8 1h29v24l-9 10H1V9z" fill="#3b9fe0"/><path d="M27 12.500A8 8 0 1 0 27 23.500" fill="none" stroke="#fff" stroke-width="5"/></svg>
<svg class="ui" style="left:1617.5px;top:1341.4px;" width="36" height="36" viewBox="0 0 36 36"><rect width="36" height="36" fill="#a8b0b6"/><rect x="0" y="0" width="36" height="18" fill="#bfc7cf"/><circle cx="18" cy="9" r="6" fill="#1d1712"/><rect x="13" y="13" width="10" height="12" fill="#d8c8a0"/><rect x="9" y="24" width="18" height="12" fill="#b5651d"/><rect x="12" y="26" width="3" height="9" fill="#3a2a1a"/><rect x="21" y="26" width="3" height="9" fill="#3a2a1a"/></svg>
<svg class="ui" style="left:1695.8px;top:1348.4px;" width="32" height="22" viewBox="0 0 32 22"><rect width="32" height="22" fill="#7fc3ea"/><circle cx="9" cy="9" r="5" fill="#e8f4fb"/><rect x="18" y="4" width="10" height="9" fill="#cfe8f6"/><rect x="3" y="16" width="26" height="3" fill="#5aa6d6"/></svg>
<svg class="ui" style="left:1770.4px;top:1341.4px;" width="36" height="36" viewBox="0 0 36 36"><defs><linearGradient id="eg" x1="0" y1="0" x2="1" y2="1"><stop offset="0" stop-color="#2fc2df"/><stop offset="0.600" stop-color="#1b74d1"/><stop offset="1" stop-color="#1454b4"/></linearGradient></defs><path d="M18 1A17 17 0 0 0 1 19C2 30 10 36 19 35c5-.5 9-3 11-6-4 2-9 1-11-3-2-4 1-8 5-8 4 0 6 3 5.500 6 4-2 6-6 5-11C33 6 26 1 18 1z" fill="url(#eg)"/><path d="M3 14C6 6 14 3 22 5c6 2 9 7 8 12-1-4-5-6-9-5-5 1-8 6-7 11-5-1-10-4-11-9z" fill="#5bd08d" opacity=".75"/></svg>
<svg class="ui" style="left:1849.7px;top:1339.4px;" width="32" height="40" viewBox="0 0 32 40"><path d="M25 17A10 10 0 1 0 25 31" fill="none" stroke="#8cc63f" stroke-width="6"/><path d="M13 12Q8 4 3 6M17 11Q22 2 28 3" fill="none" stroke="#8cc63f" stroke-width="2.400"/></svg>
<div class="b " style="left:1832.0px;top:1388.0px;width:70.0px;height:2.0px;background:#5d6a78;"></div>
<div class="b " style="left:1905.0px;top:1329.0px;width:74.0px;height:61.0px;background:#4d5863;"></div>
<svg class="ui" style="left:1923.4px;top:1341.4px;" width="36" height="36" viewBox="0 0 36 36"><circle cx="18" cy="18" r="17.500" fill="#9fb4c8"/><circle cx="18" cy="18" r="15" fill="#1b6db5"/><circle cx="11" cy="15" r="4.500" fill="none" stroke="#d9e8f5" stroke-width="1.800"/><path d="M14 18l5 5" stroke="#d9e8f5" stroke-width="2"/><rect x="17" y="14" width="12" height="9" rx="2" fill="#e8f0f7"/><circle cx="20" cy="23.500" r="2" fill="#1b6db5"/><circle cx="27" cy="23.500" r="2" fill="#1b6db5"/></svg>
<svg class="ui" style="left:2031.8px;top:1343.4px;" width="38" height="36" viewBox="0 0 38 36"><circle cx="16" cy="17" r="15.500" fill="#f4f7fa"/><circle cx="16" cy="17" r="12.500" fill="#2a86d8"/><text x="16" y="25" text-anchor="middle" font-family="Liberation Sans" font-weight="bold" font-size="23" fill="#fff">?</text><circle cx="29" cy="27" r="6.500" fill="#e3b63a"/></svg>
<svg class="ui" style="left:2086.3px;top:1352.4px;" width="22" height="13" viewBox="0 0 22 13"><path d="M1.500 11.500L11 2l9.500 9.500" fill="none" stroke="#f0f0f0" stroke-width="2.400"/></svg>
<svg class="ui" style="left:2137.3px;top:1346.4px;" width="22" height="27" viewBox="0 0 22 27"><g fill="none" stroke="#cfcfcf" stroke-width="1.800"><rect x="2" y="8" width="12" height="11" rx="2"/><path d="M14 12l6-3v9l-6-3"/><path d="M4 4q6-4 12 0M4 23q6 4 12 0"/></g></svg>
<svg class="ui" style="left:2183.2px;top:1351.4px;" width="28" height="17" viewBox="0 0 28 17"><rect x="1.200" y="1.200" width="22" height="14" fill="none" stroke="#d2d2d2" stroke-width="2.200"/><rect x="24" y="5" width="3" height="6.500" fill="#d2d2d2"/><rect x="4" y="4" width="9" height="8.500" fill="#e0e0e0"/></svg>
<svg class="ui" style="left:2237.7px;top:1348.4px;" width="22" height="22" viewBox="0 0 22 22"><g fill="none" stroke="#5c6b82" stroke-width="2"><path d="M2 20A18 18 0 0 1 20 2"/><path d="M7 20A13 13 0 0 1 20 7"/><path d="M12 20A8 8 0 0 1 20 12"/></g><circle cx="18.500" cy="18.500" r="2" fill="#5c6b82"/></svg>
<svg class="ui" style="left:2280.6px;top:1348.4px;" width="30" height="22" viewBox="0 0 30 22"><path d="M2 7.500h5l6-5.500v18l-6-5.500H2z" fill="none" stroke="#ececec" stroke-width="2"/><g fill="none" stroke="#ececec" stroke-width="1.800"><path d="M17 7q3 4 0 8"/><path d="M21 4q5 7 0 14"/><path d="M25 1.500q7 9.500 0 19"/></g></svg>
<div class="t ui" style="left:2339.5px;top:1337.3px;font-size:18.4px;line-height:18.4px;letter-spacing:-0.432px;color:#f2f2f2;">3:41 PM</div>
<div class="t ui" style="left:2336.5px;top:1364.6px;font-size:18.4px;line-height:18.4px;letter-spacing:-0.203px;color:#f2f2f2;">5/4/2021</div>
<svg class="ui" style="left:2438.0px;top:1345.4px;" width="46" height="40" viewBox="0 0 46 40"><path d="M2 2h25v19H13l-5 6v-6H2z" fill="#f4f4f4"/><g stroke="#14244b" stroke-width="1.600"><path d="M6 7h17M6 11h17M6 15h17"/></g><circle cx="30" cy="27" r="11" fill="#14244b" stroke="#8a93a3" stroke-width="1.400"/><text x="30" y="34" text-anchor="middle" font-family="Liberation Sans" font-weight="bold" font-size="18" fill="#fff">1</text></svg>
<div class="b " style="left:2499.0px;top:1329.0px;width:1.0px;height:61.0px;background:#5a6680;"></div>
<svg class="ui" style="left:496.0px;top:1247.0px;" width="36" height="37" viewBox="0 0 36 37"><circle cx="18" cy="19" r="17" fill="#b9c2ca"/><circle cx="18" cy="18" r="15.500" fill="#3d4a58"/><path d="M13 10l13 8-13 8z" fill="#fff"/></svg>
<svg class="ui" style="left:561.0px;top:1247.0px;" width="36" height="37" viewBox="0 0 36 37"><circle cx="18" cy="19" r="17" fill="#a9c3dd"/><circle cx="18" cy="18" r="15.500" fill="#1b6db5"/><rect x="11.500" y="11.500" width="13" height="13" rx="2" fill="#fff"/></svg>
<svg class="ui" style="left:639.0px;top:1247.0px;" width="36" height="37" viewBox="0 0 36 37"><circle cx="18" cy="19" r="17.500" fill="#c6ccd2"/><circle cx="18" cy="18" r="12" fill="none" stroke="#46525f" stroke-width="8"/><g stroke="#eef1f4" stroke-width="7" transform="rotate(45 18 18)"><path d="M18 2v8M18 26v8M2 18h8M26 18h8"/></g><circle cx="18" cy="18" r="8" fill="#eef1f4"/><text x="18" y="23" text-anchor="middle" font-family="Liberation Sans" font-weight="bold" font-size="13" fill="#7d8792">?</text></svg>
<svg class="ui" style="left:717.0px;top:1247.0px;" width="36" height="37" viewBox="0 0 36 37"><circle cx="18" cy="19" r="17" fill="#b9c2ca"/><circle cx="18" cy="18" r="15.500" fill="#3d4a58"/><path d="M11 12h14v2H11zM14 10h8v2h-8zM12 15h12l-1 11H13z" fill="#fff"/><path d="M16 17v7M20 17v7" stroke="#3d4a58" stroke-width="1.600"/></svg>
<svg class="ui" style="left:785.5px;top:1250.5px;" width="31" height="30" viewBox="0 0 34 35"><path d="M1 1h27l5 5v28H1z" fill="#46525f"/><rect x="7" y="1" width="18" height="12" fill="#eef1f4"/><rect x="19" y="3" width="4" height="8" fill="#46525f"/><rect x="6" y="20" width="22" height="14" fill="#eef1f4"/><rect x="9" y="23" width="5" height="9" fill="#46525f"/></svg>
<svg width="0" height="0" style="left:0;top:0"><defs><linearGradient id="og" x1="0" y1="0" x2="0" y2="1"><stop offset="0" stop-color="#cfd2d6"/><stop offset="0.550" stop-color="#8c9198"/><stop offset="1" stop-color="#2f3640"/></linearGradient></defs></svg>
<svg class="ui" style="left:380.0px;top:240.0px;" width="84" height="76" viewBox="0 0 84 76">
<path d="M5.500 58 L5.500 47 Q5.500 36 13 31 L20 16 Q22 12.500 27 12.500 L54 12.500 Q58 12.500 60 16 L67 31 Q74.500 36 74.500 47 L74.500 58 Z" fill="#1a6fb3"/>
<path d="M16.500 31.500 L23.500 17 H57 L63.500 31.500 Z" fill="#e6f0f8"/>
<ellipse cx="8" cy="27.500" rx="4.500" ry="2.600" fill="#1b6298"/>
<rect x="7" y="57" width="7.500" height="9" rx="2" fill="#161d33"/><rect x="65.500" y="57" width="7.500" height="9" rx="2" fill="#161d33"/>
<path d="M10 42 Q12 36 18 37 Q21 38 21 42 Q16 44 10 42Z" fill="#edf2f6"/>
<path d="M5.500 50 Q40 58 74.500 50 V58 H5.500Z" fill="#1a66a4"/>
<circle cx="57.100" cy="25.100" r="21.500" fill="#edc92f"/>
<circle cx="57.400" cy="16.800" r="3.100" fill="#161d33"/><path d="M54.600 23.400h6v14.600h-6z" fill="#161d33"/>
</svg>
<svg class="ui" style="left:384.0px;top:334.0px;" width="76" height="72" viewBox="0 0 76 72">
<path d="M37.500 6 L70 60 Q72.500 65 67 65 H8 Q2.500 65 5 60 Z" fill="#fafafa" stroke="url(#og)" stroke-width="2.800" stroke-linejoin="round"/>
<path d="M37.500 11.300 L64.200 58.700 H10.900 Z" fill="#edc92f"/>
<text x="37.300" y="55.500" text-anchor="middle" font-family="Liberation Sans" font-weight="bold" font-size="23" fill="#1d2433" textLength="27" lengthAdjust="spacingAndGlyphs">DTC</text>
</svg>
<svg class="ui" style="left:385.0px;top:426.0px;" width="74" height="74" viewBox="0 0 74 74">
<rect x="1.500" y="2" width="70.500" height="69.500" rx="10" fill="#fbfcfd" stroke="url(#og)" stroke-width="2.800"/>
<rect x="7" y="6.700" width="58.600" height="59.200" rx="4.500" fill="#1a6fb3"/>
<path d="M36.500 8v56" stroke="#2a8f9a" stroke-width="1"/>
<path d="M10.500 22 C14 24 14.500 52.400 21 52.400 C27.500 52.400 24 24.700 29.200 24.700 C35 24.700 34 49 40.300 49 C46.500 49 46 24 52.100 24 C57.500 24 56 51 60.400 51.700" fill="none" stroke="#dfe3c0" stroke-width="2.600" stroke-linecap="round"/>
<path d="M12.500 27 L14.800 40" stroke="#edc92f" stroke-width="2.600"/>
</svg>
<svg class="ui" style="left:388.0px;top:518.0px;" width="72" height="78" viewBox="0 0 72 78">
<rect x="4" y="9" width="60" height="65" rx="8" fill="#f7f9fa" stroke="url(#og)" stroke-width="2.800"/>
<rect x="9" y="13" width="50" height="57" rx="4" fill="#1a6fb3"/>
<rect x="17" y="3" width="34" height="11" rx="5" fill="#5a626b"/>
<g fill="none" stroke="#fff" stroke-width="3"><path d="M15 25l4 4 7-8M15 39l4 4 7-8M16 52l9 9M25 52l-9 9"/></g>
<g stroke="#9cc6e8" stroke-width="2"><path d="M32 24h20M32 29h16M32 38h20M32 43h12M32 54h10"/></g>
<path d="M36 58 L63 33 L69 40 L42 64 Z" fill="#edc92f"/><path d="M36 58l6 6-9 3z" fill="#f1e4c0"/><path d="M33 67l2-4 2 2z" fill="#222"/>
</svg>
<svg class="ui" style="left:384.0px;top:612.0px;" width="76" height="78" viewBox="0 0 76 78">
<path d="M41 33 L15 59" stroke="#46525f" stroke-width="14" stroke-linecap="round"/>
<circle cx="13.500" cy="60.500" r="11.500" fill="#46525f"/><circle cx="13.500" cy="60.500" r="5.500" fill="#fafafa"/>
<path d="M37 31.500 L22 46.500" stroke="#edc92f" stroke-width="5.500"/>
<path d="M30 46 L24 52" stroke="#1a6fb3" stroke-width="4"/>
<g transform="translate(53,21) rotate(-42)"><path d="M13.500 -13.500 A19 19 0 1 0 13.500 13.500 L6.500 7.500 A10 10 0 1 1 6.500 -7.500 Z" fill="#d6d9dc" stroke="#8b9198" stroke-width="1.800" stroke-linejoin="round"/></g>
</svg>
<svg class="ui" style="left:384.0px;top:705.0px;" width="80" height="82" viewBox="0 0 80 82">
<g transform="translate(39,41) rotate(45)"><path d="M-18.0 -23.500v-6M-18.0 23.500v6M-23.500 -18.0h-6M23.500 -18.0h6" stroke="#1d2433" stroke-width="2.800"/><path d="M-10.8 -23.500v-6M-10.8 23.500v6M-23.500 -10.8h-6M23.500 -10.8h6" stroke="#1d2433" stroke-width="2.800"/><path d="M-3.6 -23.500v-6M-3.6 23.500v6M-23.500 -3.6h-6M23.500 -3.6h6" stroke="#1d2433" stroke-width="2.800"/><path d="M3.6 -23.500v-6M3.6 23.500v6M-23.500 3.6h-6M23.500 3.6h6" stroke="#1d2433" stroke-width="2.800"/><path d="M10.8 -23.500v-6M10.8 23.500v6M-23.500 10.8h-6M23.500 10.8h6" stroke="#1d2433" stroke-width="2.800"/><path d="M18.0 -23.500v-6M18.0 23.500v6M-23.500 18.0h-6M23.500 18.0h6" stroke="#1d2433" stroke-width="2.800"/>
<rect x="-24" y="-24" width="48" height="48" rx="5" fill="#e4e8ec" stroke="#6a747e" stroke-width="2"/>
<rect x="-19" y="-19" width="38" height="38" fill="#1a6fb3"/></g>
<path d="M44 26 L27 35 L33 42 L29 46 L20 36 L40 22 Z M34 57 L51 47 L45 41 L49 36 L58 46 L38 60 Z" fill="#edc92f"/>
<path d="M33 42 L45 41 L40 46 Z" fill="#3a4a5a"/>
</svg>
<svg class="ui" style="left:383.0px;top:800.0px;" width="78" height="78" viewBox="0 0 78 78">
<g transform="translate(38.500,38.500)"><g fill="#e9ecef" stroke="#c3c8ce" stroke-width="4.500" stroke-linejoin="round"><path d="M-8.500 -24 L-5.500 -33.500 H5.500 L8.500 -24 Z" transform="rotate(22.5)" /><path d="M-8.500 -24 L-5.500 -33.500 H5.500 L8.500 -24 Z" transform="rotate(67.5)" /><path d="M-8.500 -24 L-5.500 -33.500 H5.500 L8.500 -24 Z" transform="rotate(112.5)" /><path d="M-8.500 -24 L-5.500 -33.500 H5.500 L8.500 -24 Z" transform="rotate(157.5)" /><path d="M-8.500 -24 L-5.500 -33.500 H5.500 L8.500 -24 Z" transform="rotate(202.5)" /><path d="M-8.500 -24 L-5.500 -33.500 H5.500 L8.500 -24 Z" transform="rotate(247.5)" /><path d="M-8.500 -24 L-5.500 -33.500 H5.500 L8.500 -24 Z" transform="rotate(292.5)" /><path d="M-8.500 -24 L-5.500 -33.500 H5.500 L8.500 -24 Z" transform="rotate(337.5)" /><circle r="26"/></g>
<g fill="#1a6fb3"><path d="M-8.500 -24 L-5.500 -33.500 H5.500 L8.500 -24 Z" transform="rotate(22.5)" /><path d="M-8.500 -24 L-5.500 -33.500 H5.500 L8.500 -24 Z" transform="rotate(67.5)" /><path d="M-8.500 -24 L-5.500 -33.500 H5.500 L8.500 -24 Z" transform="rotate(112.5)" /><path d="M-8.500 -24 L-5.500 -33.500 H5.500 L8.500 -24 Z" transform="rotate(157.5)" /><path d="M-8.500 -24 L-5.500 -33.500 H5.500 L8.500 -24 Z" transform="rotate(202.5)" /><path d="M-8.500 -24 L-5.500 -33.500 H5.500 L8.500 -24 Z" transform="rotate(247.5)" /><path d="M-8.500 -24 L-5.500 -33.500 H5.500 L8.500 -24 Z" transform="rotate(292.5)" /><path d="M-8.500 -24 L-5.500 -33.500 H5.500 L8.500 -24 Z" transform="rotate(337.5)" /><circle r="26.500"/></g>
<circle r="21.500" fill="none" stroke="#34465a" stroke-width="5.500"/><circle r="17" fill="none" stroke="#aab2ba" stroke-width="4.500"/><circle r="13" fill="#f5f5f5" stroke="#58a0dc" stroke-width="2"/><circle r="10" fill="#f5f5f5" stroke="#c9ced4" stroke-width="1.500"/></g>
</svg>
<svg class="ui" style="left:385.0px;top:896.0px;" width="74" height="74" viewBox="0 0 74 74">
<circle cx="37" cy="37" r="34.500" fill="#f4f6f8" stroke="#76808a" stroke-width="2.500"/>
<path d="M9 24 Q37 -4 65 24 Q62 30 56 27 Q37 16 18 27 Q12 30 9 24Z" fill="#1a6fb3"/>
<path d="M8 37 Q14 30 20 36 L32 58 Q33 66 25 64 Q10 56 8 37Z" fill="#1a6fb3"/>
<path d="M66 37 Q60 30 54 36 L42 58 Q41 66 49 64 Q64 56 66 37Z" fill="#1a6fb3"/>
<path d="M22 30 Q37 22 52 30 Q50 44 40 53 Q37 55 34 53 Q24 44 22 30Z" fill="#edc92f"/>
<text x="37" y="48" text-anchor="middle" font-family="Liberation Sans" font-weight="bold" font-size="23" fill="#1d2433">?</text>
</svg>
</body></html>
